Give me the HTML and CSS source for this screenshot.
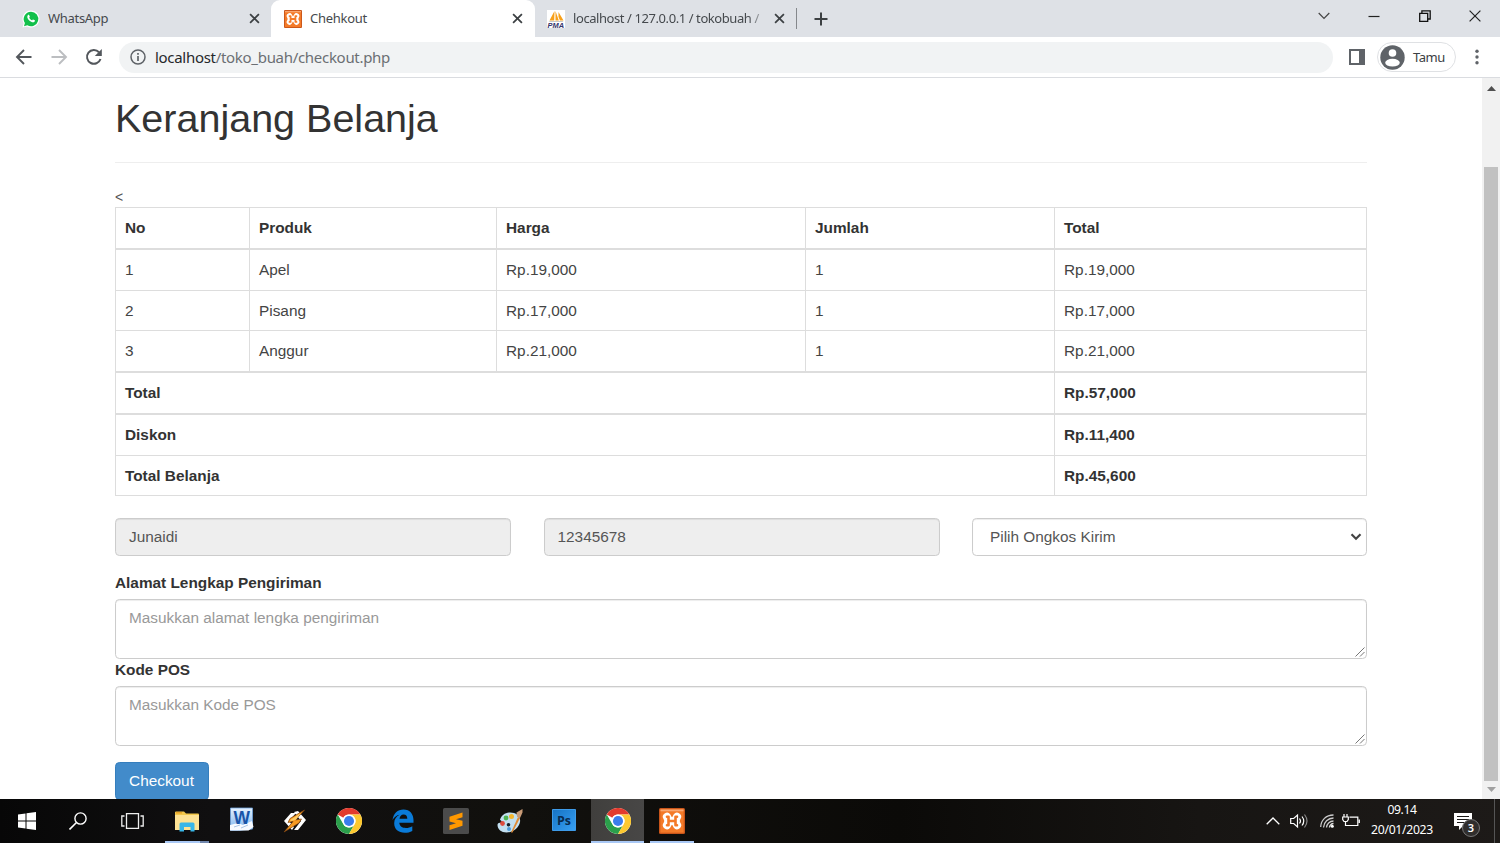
FILE: index.html
```html
<!DOCTYPE html>
<html lang="id">
<head>
<meta charset="utf-8">
<title>Chehkout</title>
<link rel="stylesheet" href="styles.css">
</head>
<body>
<svg width="0" height="0" class="defs">
  <defs>
    <symbol id="x" viewBox="0 0 10 10"><path d="M1 1l8 8M9 1L1 9" stroke="#3c4043" stroke-width="1.600" fill="none"/></symbol>
    <symbol id="xampp" viewBox="0 0 26 26">
      <rect width="26" height="26" rx="1.500" fill="#c8551a"/><rect x="1.300" y="1.300" width="23.400" height="23.400" fill="#f47a28"/><path d="M1.500 1.500h23v1.800h-23z" fill="#f9a873"/>
      <path d="M8 8.800q3 4.200 0 8.400M18 8.800q-3 4.200 0 8.400M10 13h6" fill="none" stroke="#fff" stroke-width="8.200" stroke-linecap="round"/>
      <path d="M8 8.800h1.500v8.400H8M18 8.800h-1.500v8.400H18M9.500 13h7" fill="none" stroke="#f47a28" stroke-width="2.600" stroke-linecap="round" stroke-linejoin="round"/>
    </symbol>
    <symbol id="chrome" viewBox="0 0 48 48">
      <circle cx="24" cy="24" r="24" fill="#fff"/>
      <path d="M3.200 12A24 24 0 0 1 44.800 12H24A12 12 0 0 0 13.600 18z" fill="#e33b2e"/>
      <path d="M3.200 12A24 24 0 0 0 24 48L34.400 30A12 12 0 0 1 13.600 30z" fill="#2b9f4b"/>
      <path d="M44.800 12A24 24 0 0 1 24 48L34.400 30A12 12 0 0 0 24 12z" fill="#fdc82f"/>
      <circle cx="24" cy="24" r="12" fill="#fff"/><circle cx="24" cy="24" r="9.300" fill="#3b7ded"/>
    </symbol>
  </defs>
</svg>

<header class="tabs">
  <div class="tab tab-one">
    <svg class="fav" viewBox="0 0 18 18"><path d="M9 .5a8.500 8.500 0 1 1-4 16L.5 17.600l1.200-4.300A8.500 8.500 0 0 1 9 .5z" fill="#fff"/><path d="M9 1.700a7.300 7.300 0 1 1-3.700 13.600L2 16.200l.9-3.200A7.300 7.300 0 0 1 9 1.700z" fill="#12c04b"/><path d="M6 5.100c.5-.5 1-.4 1.200.1l.6 1.400c.1.400-.5.900-.6 1.100.6 1.200 1.600 2.100 2.900 2.600.3-.1.700-.8 1-.8l1.700.8c.3.300 0 1.200-.5 1.600-1.200 1-3.300.2-4.800-1.100C5.900 9.300 4.400 6.800 6 5.100z" fill="#fff"/></svg>
    <span class="tab-title t1">WhatsApp</span>
    <svg class="close"><use href="#x"/></svg>
  </div>
  <div class="tab tab-active">
    <svg class="fav"><use href="#xampp"/></svg>
    <span class="tab-title t2">Chehkout</span>
    <svg class="close"><use href="#x"/></svg>
  </div>
  <div class="tab tab-three">
    <svg class="fav" viewBox="0 0 18 18"><path d="M0 0h18v18H0z" fill="#fff"/><path d="M7.500 1L2.500 10.500h4.700zM8.500 1v9.500h3.300zM11.500 2v5l1.500 3.500h3.500z" fill="#f8a019"/><path d="M1.500 11h15l-1 .9H3z" fill="#c9c9c9"/><text x="0.500" y="17.500" textLength="16.500" lengthAdjust="spacingAndGlyphs" class="pma">PMA</text></svg>
    <span class="tab-title t3">localhost / 127.0.0.1 / tokobuah /</span>
    <svg class="close"><use href="#x"/></svg>
  </div>
  <span class="tab-sep"></span>
  <svg class="plus" viewBox="0 0 14 14"><path d="M7 .5v13M.5 7h13" stroke="#3c4043" stroke-width="2"/></svg>
  <div class="window-controls">
    <svg width="12" height="8" viewBox="0 0 12 8"><path d="M.7 1L6 6.500 11.300 1" fill="none" stroke="#444" stroke-width="1.200"/></svg>
    <svg width="12" height="12" viewBox="0 0 12 12"><path d="M.5 6.500h11" stroke="#222" stroke-width="1.200"/></svg>
    <svg width="12" height="12" viewBox="0 0 12 12"><path d="M.7 3.300h8v8h-8zM2.900 3V.8h8.300V9H9" fill="none" stroke="#111" stroke-width="1.300"/></svg>
    <svg width="12" height="12" viewBox="0 0 12 12"><path d="M.6.600l10.800 10.800M11.400.6L.6 11.400" stroke="#222" stroke-width="1.200"/></svg>
  </div>
</header>

<nav class="toolbar">
  <svg class="nav-icon" viewBox="0 0 18 18"><path d="M16.500 9H2.500M9 2L2 9l7 7" fill="none" stroke="#53575c" stroke-width="1.900"/></svg>
  <svg class="nav-icon" viewBox="0 0 18 18"><path d="M1.500 9h14M9 2l7 7-7 7" fill="none" stroke="#bcbec1" stroke-width="1.900"/></svg>
  <svg class="nav-icon" viewBox="0 0 18 18"><path d="M15.500 11A6.900 6.900 0 1 1 14 4.200" fill="none" stroke="#53575c" stroke-width="2"/><path d="M16.800 1v7h-7z" fill="#53575c"/></svg>
  <div class="address">
    <svg width="16" height="16" viewBox="0 0 16 16"><circle cx="8" cy="8" r="7" fill="none" stroke="#5f6368" stroke-width="1.500"/><path d="M8 7v5M8 4v1.700" stroke="#5f6368" stroke-width="1.700"/></svg>
    <span class="url"><b>localhost</b>/toko_buah/checkout.php</span>
  </div>
  <svg class="panel-icon" viewBox="0 0 16 16"><path d="M1 1h14v14H1z" fill="none" stroke="#5f6368" stroke-width="2"/><path d="M10 0h6v16h-6z" fill="#5f6368"/></svg>
  <div class="profile">
    <svg width="25" height="25" viewBox="0 0 25 25"><circle cx="12.500" cy="12.500" r="12.200" fill="#5f6368"/><circle cx="12.500" cy="8" r="3.800" fill="#fff"/><ellipse cx="12.500" cy="17.700" rx="7.300" ry="3.900" fill="#fff"/></svg>
    <span>Tamu</span>
  </div>
  <svg class="dots" viewBox="0 0 4 16"><circle cx="2" cy="2.300" r="1.700"/><circle cx="2" cy="8" r="1.700"/><circle cx="2" cy="13.700" r="1.700"/></svg>
</nav>

<div class="viewport">
  <main class="page">
    <h1>Keranjang Belanja</h1>
    <p class="stray">&lt;</p>
    <table>
      <colgroup><col class="c1"><col class="c2"><col class="c3"><col class="c4"><col class="c5"></colgroup>
      <tr class="thick"><th>No</th><th>Produk</th><th>Harga</th><th>Jumlah</th><th>Total</th></tr>
      <tr class="tall"><td>1</td><td>Apel</td><td>Rp.19,000</td><td>1</td><td>Rp.19,000</td></tr>
      <tr><td>2</td><td>Pisang</td><td>Rp.17,000</td><td>1</td><td>Rp.17,000</td></tr>
      <tr class="thick"><td>3</td><td>Anggur</td><td>Rp.21,000</td><td>1</td><td>Rp.21,000</td></tr>
      <tr class="thick"><th colspan="4">Total</th><th>Rp.57,000</th></tr>
      <tr class="tall"><th colspan="4">Diskon</th><th>Rp.11,400</th></tr>
      <tr><th colspan="4">Total Belanja</th><th>Rp.45,600</th></tr>
    </table>
    <form>
      <div class="fields">
        <div class="control readonly">Junaidi</div>
        <div class="control readonly">12345678</div>
        <div class="control select"><span>Pilih Ongkos Kirim</span><svg width="12" height="8" viewBox="0 0 12 8"><path d="M1.500 1.300L6 5.700l4.500-4.400" fill="none" stroke="#444" stroke-width="2.200"/></svg></div>
      </div>
      <label>Alamat Lengkap Pengiriman</label>
      <div class="control area"><span>Masukkan alamat lengka pengiriman</span><svg class="grip" viewBox="0 0 10 10"><path d="M.5 9.500l9-9M5 9.500L9.500 5" stroke="#777" stroke-width="1"/></svg></div>
      <label class="second">Kode POS</label>
      <div class="control area"><span>Masukkan Kode POS</span><svg class="grip" viewBox="0 0 10 10"><path d="M.5 9.500l9-9M5 9.500L9.500 5" stroke="#777" stroke-width="1"/></svg></div>
      <button type="button">Checkout</button>
    </form>
  </main>
  <div class="scrollbar">
    <svg width="9" height="5" viewBox="0 0 9 5"><path d="M0 5L4.500 0 9 5z" fill="#505050"/></svg>
    <div class="thumb"></div>
    <svg width="9" height="5" viewBox="0 0 9 5"><path d="M0 0l4.500 5L9 0z" fill="#a0a0a0"/></svg>
  </div>
</div>

<footer class="taskbar">
  <div class="apps">
    <div class="app"><svg width="18" height="18" viewBox="0 0 18 18"><path d="M0 2.500L7.500 1.400v7.100H0zM8.500 1.300L18 0v8.500H8.500zM0 9.500h7.500v7.100L0 15.500zM8.500 9.500H18V18l-9.500-1.300z" fill="#fff"/></svg></div>
    <div class="app shift"><svg width="18" height="18" viewBox="0 0 18 18"><circle cx="11.500" cy="6.500" r="5.600" fill="none" stroke="#fff" stroke-width="1.400"/><path d="M7.500 10.500L.5 17.500" stroke="#fff" stroke-width="1.600"/></svg></div>
    <div class="app shift"><svg width="23" height="16" viewBox="0 0 23 16"><path d="M5.500.7h12v14.600h-12zM3.500 3H.8v10h2.700M19.500 3h2.700v10h-2.700" fill="none" stroke="#eee" stroke-width="1.300"/></svg></div>
    <div class="app running grouped"><svg width="24" height="21" viewBox="0 0 24 21"><path d="M0 1.500Q0 .5 1 .5h8l2 2h12q1 0 1 1V19H0z" fill="#f2c84c"/><path d="M0 4h24v15H0z" fill="#fde294"/><path d="M1 1.200h6v1.200H1z" fill="#e69a1f"/><path d="M4.500 20.500V13q0-1.500 1.500-1.500h12q1.500 0 1.500 1.500v7.500h-4V16H9v4.500z" fill="#38b6e8"/></svg></div>
    <div class="app word"><svg width="25" height="25" viewBox="0 0 25 25"><defs><linearGradient id="wd" x1="0" y1="0" x2="0" y2="1"><stop stop-color="#e6f2ff"/><stop offset="1" stop-color="#78b2ee"/></linearGradient></defs><path d="M1.500 1h22v21l-14 1.500H1.500z" fill="url(#wd)" stroke="#6ea2dc" stroke-width=".8"/><path d="M1 18l8-2 5 2 9-4 1.500 6-5 3.500H1z" fill="#f6faff"/><path d="M5 20l6-2M12 21l7-3" stroke="#a9c4e4"/><text x="4.500" y="16.800" textLength="16.500" lengthAdjust="spacingAndGlyphs" class="word-w">W</text></svg></div>
    <div class="app"><svg width="24" height="24" viewBox="0 0 24 24"><path d="M1 12L8 4h5L6 12l5 6-2 3zM11 3l4-1 8 9-8 10h-4l7-9z" fill="#fff"/><path d="M21.500 1L7 9.500l-2 4 5-1L1 23l15-9 2.500-4-6 1z" fill="#f79a22" stroke="#7e4411" stroke-width=".7"/><path d="M18 4L8 10.500l-1 1.800 6-1.600z" fill="#ffcc62"/></svg></div>
    <div class="app"><svg width="26" height="26"><use href="#chrome"/></svg></div>
    <div class="app"><svg width="22" height="24" viewBox="0 0 22 24"><path d="M.5 11C1.500 4.500 5.500.500 11.500.500c6.500 0 10 4.800 10 10.500v2.800H7.300c.3 3.500 3 5.200 6.500 5.200 2.500 0 4.700-.7 6.500-1.800v4.700C18 23.200 15.500 23.700 12.700 23.700c-6.200 0-10.500-3.500-10.500-9.500 0-3.700 2-6.700 5.300-8.400C4.800 6.300 2.200 8 .5 11zM7.500 9.700h7.800c0-2.800-1.300-4.300-3.700-4.300S7.900 7 7.500 9.700z" fill="#0a7bd8"/></svg></div>
    <div class="app"><svg width="26" height="26" viewBox="0 0 26 26"><rect width="26" height="26" rx="1.500" fill="#4b4b4b"/><path d="M6.500 8.700L19.500 4.500v4.700L13 11.300l6.500 1.500v5L6.500 22v-4.700l6.500-2.100-6.500-1.700z" fill="#ff9800"/></svg></div>
    <div class="app"><svg width="26" height="24" viewBox="0 0 26 24"><path d="M12 3.500C19 3 24 7 23 13c-1 6-7 10.500-13.500 10.500C4.500 23.500.5 20.500.5 16c0-2 2-2.500 3.500-2 2-1 0-2.500-1-3C4 6.500 8 3.800 12 3.500z" fill="#c2dff0"/><circle cx="5.500" cy="14.500" r="2.400" fill="#dd4c3e"/><circle cx="9" cy="9" r="2.400" fill="#4eb453"/><circle cx="14.500" cy="7.500" r="2.500" fill="#f4b62e"/><circle cx="11.500" cy="15.800" r="1.800" fill="#16212a"/><circle cx="12" cy="20" r="2" fill="#4d9cdb"/><path d="M14 23.500L21 8l2 1-7.500 14.500z" fill="#df8b35"/><path d="M19.500 3.500L25.500 0v3.500L23 9l-3-1.200z" fill="#c99b77"/></svg></div>
    <div class="app word"><svg width="24" height="22" viewBox="0 0 24 22"><defs><linearGradient id="ps" x1="0" y1="0" x2="1" y2="1"><stop stop-color="#1673c4"/><stop offset="1" stop-color="#37a0f4"/></linearGradient></defs><path d="M.5.500h23v21H.5z" fill="url(#ps)" stroke="#3e9be8"/><text x="5" y="15.500" textLength="14" lengthAdjust="spacingAndGlyphs" class="ps">Ps</text></svg></div>
    <div class="app running current"><svg width="26" height="26"><use href="#chrome"/></svg></div>
    <div class="app running"><svg width="26" height="26"><use href="#xampp"/></svg></div>
  </div>
  <div class="tray">
    <svg width="14" height="8" viewBox="0 0 14 8"><path d="M.7 7.300L7 1l6.300 6.300" fill="none" stroke="#fff" stroke-width="1.300"/></svg>
    <svg class="vol" width="18" height="16" viewBox="0 0 18 16"><path d="M.7 5.500h3L7.500 2v12L3.700 10.500h-3z" fill="none" stroke="#fff" stroke-width="1.200"/><path d="M9.500 5.500q2 2.500 0 5M12 3.500q3.500 4.500 0 9" fill="none" stroke="#fff" stroke-width="1.200"/><path d="M14.500 1.500q5 6.500 0 13" fill="none" stroke="#888" stroke-width="1.200"/></svg>
    <svg class="wifi" width="14" height="14" viewBox="0 0 14 14"><path d="M.7 13C1 6 6 1 13.500 1M3.500 13.500C3.800 8 8 4 13.500 4M6.500 13.500C6.700 10 9.500 7 13.500 7" fill="none" stroke="#ccc" stroke-width="1.300"/><path d="M9.500 13.500c0-2 2-4 4-4" fill="none" stroke="#ddd" stroke-width="1.400"/><circle cx="12.300" cy="12.300" r="1.500" fill="#fff"/></svg>
    <svg class="battery" width="18" height="14" viewBox="0 0 18 14"><path d="M2 0v3M5 0v3M.7 3h5.600v2.500L5 7.500H2L.7 5.500zM3.500 7.500V12M7.500 3.200h8.300v8.300H4M17.300 5.500v3.500" fill="none" stroke="#fff" stroke-width="1.200"/></svg>
    <div class="clock"><span class="time">09.14</span><span class="date">20/01/2023</span></div>
    <div class="notice"><svg width="18" height="17" viewBox="0 0 18 17"><path d="M0 0h18v13H9l-4 4v-4H0z" fill="#fff"/><path d="M3 3.500h12M3 6.500h12M3 9.500h8" stroke="#1a1816" stroke-width="1.100"/></svg><span class="badge">3</span></div>
    <span class="desktop-edge"></span>
  </div>
</footer>
</body>
</html>
```
FILE: styles.css
```css
* { box-sizing: border-box; }
body { margin: 0; width: 1500px; height: 843px; overflow: hidden; display: flex; flex-direction: column; background: #fff; font-family: "Liberation Sans", Arial, sans-serif; font-size: 15.37px; color: #333; }
svg { display: block; flex: none; }
.defs { position: absolute; }

.tabs { height: 37px; flex: none; display: flex; align-items: center; background: #dee1e6; font-family: "Noto Sans", "Open Sans", sans-serif; }
.tab { height: 37px; display: flex; align-items: center; }
.tab-one { width: 271px; padding: 0 11px 0 22px; border-radius: 0 0 8px 0; }
.tab-active { width: 264px; padding: 0 12px 0 13px; background: #fff; border-radius: 9px 9px 0 0; }
.tab-three { width: 261px; padding: 0 11px 0 12px; }
.fav { width: 18px; height: 18px; overflow: visible; }
.tab-title { margin: -2px 0 0 8px; flex: 1; font-size: 13px; color: #45494d; white-space: nowrap; overflow: hidden; }
.t1 { letter-spacing: -.3px; }
.t2 { letter-spacing: -.28px; }
.t3 { letter-spacing: -.42px; -webkit-mask-image: linear-gradient(to right, #000 175px, transparent 195px); mask-image: linear-gradient(to right, #000 175px, transparent 195px); }
.close { width: 11px; height: 11px; }
.pma { font: italic bold 7.500px "Liberation Sans", sans-serif; fill: #35356c; }
.tab-sep { width: 1px; height: 21px; background: #85888c; }
.plus { width: 14px; height: 14px; margin-left: 17px; }
.window-controls { margin-left: auto; padding: 0 19px 6px 0; display: flex; align-items: center; gap: 38.500px; }

.toolbar { height: 41px; flex: none; display: flex; align-items: center; padding: 0 21px 0 15px; border-bottom: 1px solid #dadce0; font-family: "Noto Sans", "Open Sans", sans-serif; }
.nav-icon { width: 18px; height: 18px; margin-right: 17px; }
.address { width: 1214px; height: 31px; margin-left: -1px; padding-left: 11px; display: flex; align-items: center; gap: 9px; border-radius: 16px; background: #f1f3f4; }
.url { font-size: 15px; letter-spacing: -.3px; color: #6b6f73; }
.url b { font-weight: 400; color: #26282b; }
.panel-icon { width: 16px; height: 16px; margin-left: 16px; }
.profile { width: 79px; height: 30px; margin-left: 12px; padding-left: 2px; display: flex; align-items: center; gap: 8px; border: 1px solid #dfe1e4; border-radius: 15px; font-size: 13px; letter-spacing: -.5px; color: #3c4043; }
.dots { width: 4px; height: 16px; margin-left: auto; fill: #5f6368; }

.viewport { height: 721px; flex: none; display: flex; overflow: hidden; }
.page { width: 1367px; padding: 0 0 0 115px; }
h1 { margin: 0; height: 85px; padding-top: 18px; border-bottom: 1px solid #eee; font-size: 39.500px; line-height: 44px; font-weight: 400; }
.stray { margin: 0; padding-top: 23px; height: 44px; line-height: 22px; font-size: 14px; color: #555; }
table { width: 1252px; table-layout: fixed; border-collapse: separate; border-spacing: 0; border: solid #ddd; border-width: 1px 0 0 1px; }
.c1 { width: 134px; } .c2 { width: 247px; } .c3 { width: 309px; } .c4 { width: 249px; } .c5 { width: 312px; }
tr { height: 40px; }
tr.tall { height: 41px; }
tr.thick { height: 42px; }
td, th { padding: 0 9px; border: solid #ddd; border-width: 0 1px 1px 0; text-align: left; vertical-align: middle; line-height: 20px; }
td { color: #444; }
.thick td, .thick th { border-bottom-width: 2px; }

form { padding-top: 22px; }
.fields { display: grid; grid-template-columns: 396px 396px 395px; justify-content: space-between; }
.control { height: 38px; padding: 0 13px; display: flex; align-items: center; border: 1px solid #ccc; border-radius: 4.400px; box-shadow: inset 0 1px 1px rgba(0,0,0,.075); color: #555; }
.readonly { background: #eee; }
.select { padding: 0 4px 0 17px; justify-content: space-between; }
label { display: block; height: 43px; padding-top: 16px; line-height: 22px; font-weight: 700; }
label.second { height: 27px; padding-top: 0; }
.control.area { height: 60px; align-items: flex-start; justify-content: space-between; padding: 7px 1px 1px 13px; line-height: 22px; color: #999; }
.grip { width: 10px; height: 10px; align-self: flex-end; }
button { display: block; width: 94px; height: 38px; margin-top: 16px; padding: 0 1px 0 0; border: 1px solid #357ebd; border-radius: 4.400px; background: #428bca; color: #fff; font: inherit; }

.scrollbar { width: 18px; margin-left: auto; padding: 8px 0 7px; display: flex; flex-direction: column; align-items: center; background: #f1f1f1; }
.thumb { width: 14px; height: 614px; margin: 76px 0 auto; background: #c1c1c1; }

.taskbar { height: 44px; flex: none; display: flex; background: linear-gradient(90deg, #070707 0, #100f10 14%, #11100d 35%, #0b0a08 60%, #171513 80%, #1d1a18); }
.apps { display: flex; }
.app { width: 53.800px; height: 44px; display: flex; align-items: center; justify-content: center; }
.app:first-child { width: 53px; }
.app.shift { padding-right: 3px; }
.app.word { padding-bottom: 3px; }
.running { background: linear-gradient(#a9c8f5, #a9c8f5) center bottom / 44px 2px no-repeat; }
.grouped { background: linear-gradient(90deg, #a9c8f5 35px, #7087ad 35px) center bottom / 44px 2px no-repeat; }
.current { background: linear-gradient(#a9c8f5, #a9c8f5) center bottom / 53px 2px no-repeat, linear-gradient(90deg, #403f3d, #484746) center / 53px 44px no-repeat; }
.word-w { font: bold 18px "Liberation Sans", sans-serif; fill: #1754a8; }
.ps { font: bold 13px "Open Sans", sans-serif; fill: #082b50; }
.tray { margin-left: auto; display: flex; align-items: center; color: #fff; font-family: "Noto Sans", "Open Sans", sans-serif; }
.vol { margin-left: 10px; }
.wifi { margin-left: 12px; }
.battery { margin-left: 8px; }
.clock { width: 68px; margin-left: 8px; display: flex; flex-direction: column; align-items: center; font-size: 12.200px; line-height: 20px; white-space: nowrap; padding-bottom: 2px; }
.time { letter-spacing: -.4px; }
.date { letter-spacing: -.3px; }
.notice { position: relative; width: 18px; margin-left: 18px; }
.badge { position: absolute; left: 8px; top: 6px; width: 18px; height: 18px; border: 1px solid #777; border-radius: 50%; background: #302e2d; font-size: 11px; line-height: 16px; text-align: center; font-weight: 600; }
.desktop-edge { width: 1px; height: 44px; margin: 0 5px 0 22px; background: #555; }
```
